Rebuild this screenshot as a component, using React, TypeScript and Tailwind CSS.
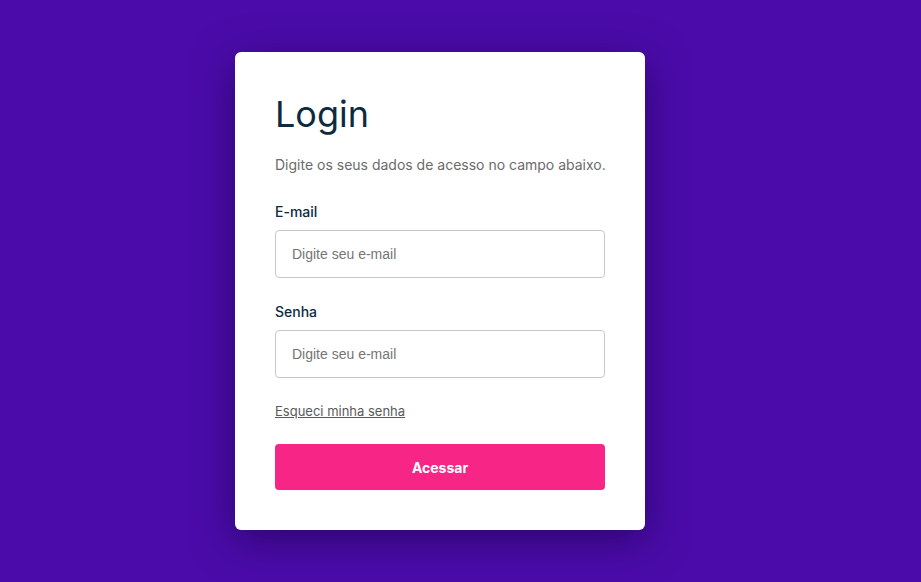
export default function App() {
  return (
    <div className="min-h-screen w-full bg-[#4b0baa] flex justify-center pt-[52px] pr-[41px]" style={{ fontFamily: "Inter, 'Noto Sans', sans-serif" }}>
      <div className="w-[410px] h-[478px] bg-white rounded-[6px] px-10 pt-[40px] shadow-[0_10px_40px_rgba(20,0,60,0.55)]">
        <h1 className="text-[36px] leading-[44px] text-[#0c2b40] font-normal">Login</h1>
        <p className="mt-[19px] text-[14px] leading-[20px] text-[#6b6b6b] whitespace-nowrap">Digite os seus dados de acesso no campo abaixo.</p>
        <label className="block mt-[27px] text-[14px] leading-[20px] font-medium text-[#0c2b40]">E-mail</label>
        <input
          className="mt-[8px] w-full h-[48px] rounded-[4px] border border-[#c8c8c8] px-4 text-[14px] outline-none placeholder:text-[#757575]"
          style={{ fontFamily: "'Liberation Sans', Arial, sans-serif" }}
          placeholder="Digite seu e-mail"
        />
        <label className="block mt-[24px] text-[14px] leading-[20px] font-medium text-[#0c2b40]">Senha</label>
        <input
          className="mt-[8px] w-full h-[48px] rounded-[4px] border border-[#c8c8c8] px-4 text-[14px] outline-none placeholder:text-[#757575]"
          style={{ fontFamily: "'Liberation Sans', Arial, sans-serif" }}
          placeholder="Digite seu e-mail"
        />
        <a className="block mt-[24px] text-[13px] leading-[18px] text-[#5a5a5a] underline">Esqueci minha senha</a>
        <button className="mt-[24px] w-full h-[46px] rounded-[4px] bg-[#f72585] text-white text-[14px] font-bold">Acessar</button>
      </div>
    </div>
  );
}
